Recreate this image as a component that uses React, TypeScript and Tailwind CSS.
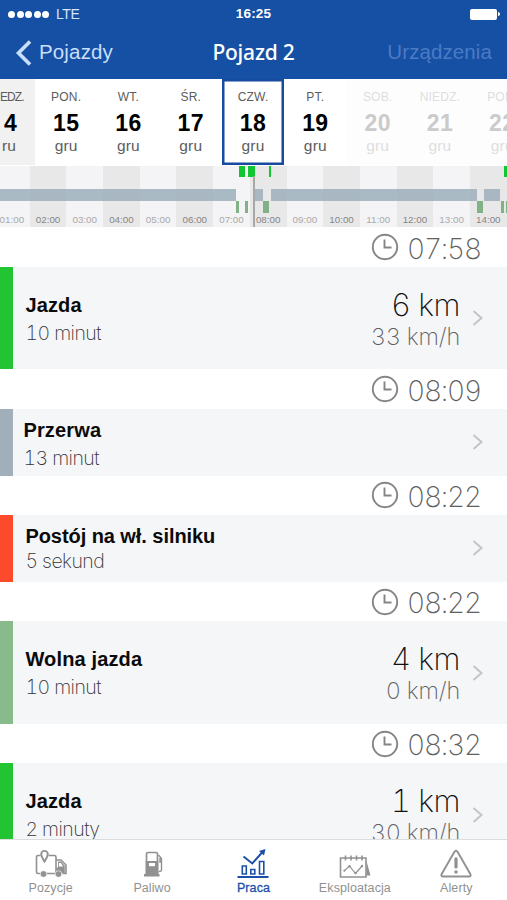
import clsx from "clsx";

const days = [
  { name: "PON.", num: "15", tone: "normal" },
  { name: "WT.", num: "16", tone: "normal" },
  { name: "ŚR.", num: "17", tone: "normal" },
  { name: "CZW.", num: "18", tone: "selected" },
  { name: "PT.", num: "19", tone: "normal" },
  { name: "SOB.", num: "20", tone: "future" },
  { name: "NIEDZ.", num: "21", tone: "future" },
  { name: "PON.", num: "22", tone: "future" },
];

const hours = Array.from({ length: 14 }).map(
  (_, i) => `${String(i + 1).padStart(2, "0")}:00`,
);

// Timeline segments, left/width in px
const stops = [[0, 236], [255, 8], [271, 206], [484, 16]];
const drives = [[239, 6], [248, 7], [269, 2], [504, 3]];
const slow = [[236, 3], [245, 3], [263, 6], [477, 6], [501, 3], [506, 1]];

const events = [
  { time: "07:58", title: "Jazda", length: "10 minut", color: "bg-[#22c531]", km: "6 km", speed: "33 km/h", pad: "pl-[12px]" },
  { time: "08:09", title: "Przerwa", length: "13 minut", color: "bg-[#a0afba]", pad: "pl-[10px]" },
  { time: "08:22", title: "Postój na wł. silniku", length: "5 sekund", color: "bg-[#fc4a2a]", pad: "pl-[12px]", tight: true },
  { time: "08:22", title: "Wolna jazda", length: "10 minut", color: "bg-[#88bb8c]", km: "4 km", speed: "0 km/h", pad: "pl-[12px]" },
  { time: "08:32", title: "Jazda", length: "2 minuty", color: "bg-[#22c531]", km: "1 km", speed: "30 km/h", pad: "pl-[12px]" },
];

function Header() {
  return (
    <header className="h-[79px] shrink-0 bg-[#1650a5] text-white">
      <div className="grid h-7 grid-cols-3 items-center px-2">
        <div className="flex items-center gap-[1.6px]">
          {[0, 1, 2, 3, 4].map((i) => (
            <span key={i} className="h-[7px] w-[7px] rounded-full bg-white" />
          ))}
          <span className="ml-[5px] text-[14px] tracking-[-0.4px] text-[#d5e5fb]">LTE</span>
        </div>
        <div className="text-center text-[13.5px] font-bold tracking-[0.2px]">16:25</div>
        <div className="flex items-center justify-end">
          <span className="h-[11px] w-[27px] rounded-[2px] bg-white" />
          <span className="mr-[-1px] ml-px h-1 w-[2px] rounded-r-full bg-white" />
        </div>
      </div>
      <div className="grid h-[49px] grid-cols-3 items-center">
        <div className="flex items-center pl-[15px] text-[#c8dffc]">
          <svg width="17" height="26" viewBox="0 0 17 26" fill="none" stroke="currentColor" strokeWidth="3.6">
            <path d="M15 1.500 3.500 13 15 24.500" />
          </svg>
          <span className="ml-[7px] text-[20.500px] tracking-[0.15px]">Pojazdy</span>
        </div>
        <h1 className="text-center font-['Noto_Sans'] text-[21px] font-medium tracking-[-0.2px] whitespace-nowrap">
          Pojazd 2
        </h1>
        <div className="pr-[15px] text-right text-[20.500px] tracking-[0.1px] text-[#4a7bc4]">Urządzenia</div>
      </div>
    </header>
  );
}

function DayStrip() {
  return (
    <div className="flex h-[87px] shrink-0 overflow-hidden bg-white">
      {/* Sunday is mostly scrolled out of view */}
      <div className="flex h-[86px] w-[35px] shrink-0 flex-col bg-[#f1f1f1] text-[#5c5c5c]">
        <span className="mt-[10px] text-[12px] leading-4 tracking-[-0.9px]">EDZ.</span>
        <span className="mt-[5px] pl-[4px] text-[23px] leading-[27px] font-bold text-black">4</span>
        <span className="text-[15.500px] leading-[18px] pl-[2px]">ru</span>
      </div>
      <div className="flex h-[86px] shrink-0">
        {days.map((d) => (
          <div
            key={d.num}
            className={clsx(
              "flex w-[62.3px] shrink-0 flex-col items-center",
              d.tone === "selected" && "shadow-[inset_0_0_0_2.5px_#174b9f]",
              d.tone === "future" ? "bg-[#fdfdfd] text-[#dedede]" : "text-[#5c5c5c]",
            )}
          >
            <span className="mt-[10px] text-[12px] leading-4 tracking-[0.2px]">{d.name}</span>
            <span
              className={clsx(
                "mt-[5px] text-[23px] leading-[27px] font-bold tracking-[0.4px]",
                d.tone === "future" ? "text-[#cbcbcb]" : "text-black",
              )}
            >
              {d.num}
            </span>
            <span className="text-[15.500px] leading-[18px] tracking-[0.2px]">gru</span>
          </div>
        ))}
      </div>
    </div>
  );
}

function Timeline() {
  return (
    <div className="relative h-[61.4px] shrink-0 overflow-hidden">
      <div className="flex h-[61px]">
        {hours.map((h, i) => (
          <div
            key={h}
            className={clsx(
              "flex shrink-0 items-end justify-center pb-[2px] text-[9.800px] leading-[11px]",
              i === 0 ? "w-[29.7px] pr-[6px]" : "w-[36.7px]",
              i % 2 ? "bg-[#e9e8e9] text-[#858585]" : "bg-[#f4f3f5] text-[#aaaaaa]",
            )}
          >
            {h}
          </div>
        ))}
      </div>
      {stops.map(([left, width]) => (
        <span key={left} className="absolute top-[23px] h-[12px] bg-[#91a7b3]/75" style={{ left, width }} />
      ))}
      {drives.map(([left, width]) => (
        <span key={left} className="absolute top-0 h-[11px] bg-[#12c631]" style={{ left, width }} />
      ))}
      {slow.map(([left, width]) => (
        <span key={left} className="absolute top-[35px] h-[12px] bg-[#80b285]" style={{ left, width }} />
      ))}
      <span className="absolute top-[10px] left-[253px] h-[51px] w-[2px] bg-[#a8a8a8]" />
    </div>
  );
}

function Clock() {
  return (
    <svg width="28" height="28" viewBox="0 0 28 28" fill="none" stroke="#858585" strokeWidth="1.9">
      <circle cx="14" cy="14" r="12.200" />
      <path d="M13.500 6.500V14.500H20.500" />
    </svg>
  );
}

function EventRow({ event }: { event: (typeof events)[number] }) {
  const tall = !!event.km;
  return (
    <>
      <div className="flex h-[39.6px] shrink-0 items-center justify-end pr-[26px]">
        <Clock />
        <span className="ml-[8px] w-[74px] pt-[3px] font-['Inter'] text-[28px] leading-8 font-extralight tracking-[-1.2px] whitespace-nowrap text-[#606060] tabular-nums">
          {event.time}
        </span>
      </div>
      <div className={clsx("flex shrink-0 bg-[#f5f6f8]", tall ? "h-[102.4px]" : "h-[66.6px]")}>
        <div className={clsx("w-[13.4px] shrink-0", event.color)} />
        <div className={clsx("flex-1", event.pad, tall ? "pt-[25px]" : "pt-[8px]")}>
          <div
            className={clsx(
              "text-[20px] leading-[26px] font-bold text-[#0b0b0b]",
              event.tight ? "tracking-[-0.06px]" : "tracking-[0.15px]",
            )}
          >
            {event.title}
          </div>
          <div
            className={clsx(
              "font-['Inter'] text-[19.500px] leading-[26px] font-extralight tracking-[-0.55px] text-[#333] tabular-nums",
              event.tight ? "mt-[-1px]" : "mt-[2px]",
            )}
          >
            {event.length}
          </div>
        </div>
        {tall && (
          <div className="pt-[20px] text-right font-['Inter'] font-extralight tabular-nums">
            <div className="text-[31px] leading-[36px] tracking-[-0.5px] text-[#111]">{event.km}</div>
            <div className="text-[23.500px] leading-[28px] tracking-[-0.2px] text-[#606060]">{event.speed}</div>
          </div>
        )}
        <div className="flex w-[47px] shrink-0 items-center pl-[12px]">
          <svg width="12" height="18" viewBox="0 0 12 18" fill="none" stroke="#c3c5c8" strokeWidth="2">
            <path d="M1.500 2 9.500 9l-8 7" />
          </svg>
        </div>
      </div>
    </>
  );
}

function TruckIcon() {
  return (
    <svg width="34" height="30" viewBox="0 0 34 30" fill="none" stroke="currentColor" strokeWidth="1.6">
      <path d="M6 24.500H4A1.500 1.500 0 0 1 2.500 23V8A1.500 1.500 0 0 1 4 6.500h2.500M14.500 6.500h6A1.500 1.500 0 0 1 22 8v16.500h-9.500M22 11h5l5 5v8.500h-3.500" />
      <path d="M24 12.500h3l3.800 4.200v7.300H22.500v-5.500H24z" fill="currentColor" stroke="none" />
      <path d="M24.800 14h2l2.400 3.500h-4.400z" fill="#fff" stroke="none" />
      <path d="M10.500 12.500C8.200 8.500 7.200 7.200 7.200 5.200a3.300 3.300 0 0 1 6.600 0c0 2-1 3.300-3.300 7.300z" strokeWidth="1.900" />
      <circle cx="9.500" cy="25" r="3.300" fill="currentColor" stroke="#fff" strokeWidth="0.600" />
      <circle cx="24.500" cy="25" r="3.300" fill="currentColor" stroke="#fff" strokeWidth="0.600" />
    </svg>
  );
}

function PumpIcon() {
  return (
    <svg className="mb-[2px] ml-[4px]" width="22" height="27" viewBox="0 0 22 27" fill="none" stroke="currentColor" strokeWidth="1.700">
      <path d="M3.500 24V4A1.500 1.500 0 0 1 5 2.500h8A1.500 1.500 0 0 1 14.500 4v20" />
      <path d="M2.700 11h12.600v13H16.500v2.500H1V24h1.700z" fill="currentColor" stroke="none" />
      <path d="M6 13h6v3.200H6z" fill="#fff" stroke="none" />
      <path d="m15.500 5 3 3.500V20q0 1.600-2.800 1.500M18.500 12h-1.500V8" strokeWidth="1.400" />
    </svg>
  );
}

function ChartIcon() {
  return (
    <svg width="34" height="32" viewBox="0 0 34 32" fill="none" stroke="currentColor" strokeWidth="1.600">
      <path d="M1.500 30h31" strokeWidth="2" />
      <path d="M6.300 19h4v8h-4zM14.800 22.500h4v4.500h-4zM23.500 14.500h4.300V27h-4.300z" />
      <path d="m7.500 9.500 8.800 7L26.500 5" strokeWidth="2" />
      <path d="m29.500 2-1.500 6.500-5-4.500z" fill="currentColor" stroke="none" />
    </svg>
  );
}

function CalendarIcon() {
  return (
    <svg width="34" height="26" viewBox="0 0 34 26" fill="none" stroke="currentColor" strokeWidth="1.600">
      <path d="M2.500 5H28v19H2.500zM7.500 2.500v5M13 2.500v5M18.500 2.500v5M24 2.500v5" />
      <path d="m6 18 5.500-5 6 7.500 6.500-7.500" strokeWidth="1.200" />
      <circle cx="6.300" cy="17.800" r="1" fill="currentColor" stroke="none" />
      <circle cx="11.500" cy="13.200" r="1.200" fill="currentColor" stroke="none" />
      <circle cx="17.500" cy="20" r="1.200" fill="currentColor" stroke="none" />
      <circle cx="24" cy="13" r="1.200" fill="currentColor" stroke="none" />
      <path d="M28.500 8 32.500 22.500h-4z" fill="currentColor" stroke="none" />
    </svg>
  );
}

function AlertIcon() {
  return (
    <svg width="34" height="30" viewBox="0 0 34 30" fill="none" stroke="currentColor" strokeWidth="1.900">
      <path d="M15.300 3q1.700-2.600 3.400 0l12.600 22q1.200 2.500-1.600 2.500H4.300q-2.800 0-1.600-2.500z" />
      <path d="M17 9.800v8.200" strokeWidth="3.200" strokeLinecap="round" />
      <circle cx="17" cy="23" r="1.700" fill="currentColor" stroke="none" />
    </svg>
  );
}

const tabs = [
  { label: "Pozycje", icon: <TruckIcon /> },
  { label: "Paliwo", icon: <PumpIcon /> },
  { label: "Praca", icon: <ChartIcon />, active: true },
  { label: "Eksploatacja", icon: <CalendarIcon /> },
  { label: "Alerty", icon: <AlertIcon /> },
];

export default function App() {
  return (
    <div className="flex h-[900px] w-[507px] flex-col overflow-hidden bg-white font-['Liberation_Sans',sans-serif]">
      <Header />
      <DayStrip />
      <Timeline />
      <main className="flex min-h-0 flex-1 flex-col overflow-hidden">
        {events.map((e, i) => (
          <EventRow key={i} event={e} />
        ))}
      </main>
      <nav className="grid h-[60.6px] shrink-0 grid-cols-5 border-t border-[#dcdcdc] bg-white">
        {tabs.map((t) => (
          <div
            key={t.label}
            className={clsx("flex flex-col items-center", t.active ? "text-[#1c50a8]" : "text-[#919191]")}
          >
            <div className="flex h-[40px] items-end justify-center pb-[1px]">{t.icon}</div>
            <span
              className={clsx(
                "mt-px text-[12.500px] leading-[14px] tracking-[0.1px]",
                t.active && "[-webkit-text-stroke:0.3px]",
              )}
            >
              {t.label}
            </span>
          </div>
        ))}
      </nav>
    </div>
  );
}
